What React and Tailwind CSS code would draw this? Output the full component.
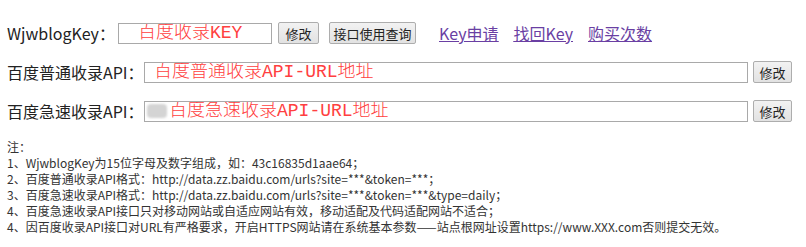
import React from 'react';

const cjk = { fontFamily: '"Noto Sans CJK SC", sans-serif' };
const red = { fontFamily: '"Liberation Mono", "Noto Sans CJK SC", monospace' };

function Btn({ children, className = '' }) {
  return (
    <button
      type="button"
      className={`h-[22px] px-0 whitespace-nowrap flex items-center justify-center border border-[#adadad] rounded-[2px] bg-gradient-to-b from-[#f2f2f2] to-[#e2e2e2] text-[13px] leading-none text-[#222] ${className}`}
    >
      {children}
    </button>
  );
}

export default function App() {
  return (
    <div className="w-[806px] h-[247px] overflow-hidden bg-white pl-[7px] pt-[22px] text-[#222]" style={cjk}>
      <div className="flex items-center h-[22px]">
        <span className="text-[16px] w-[111px]">WjwblogKey：</span>
        <div className="w-[154px] h-[21px] border border-[#a9a9a9] flex items-center pl-[19px] overflow-hidden">
          <span className="text-[18px] leading-none font-light text-[#ff4040] whitespace-nowrap" style={red}>百度收录KEY</span>
        </div>
        <Btn className="ml-[6px] w-[41px]">修改</Btn>
        <Btn className="ml-[10px] w-[87px]">接口使用查询</Btn>
        <div className="flex items-center gap-[15px] ml-[23px] text-[16px] text-[#6a3fa3] underline">
          <a href="#">Key申请</a>
          <a href="#">找回Key</a>
          <a href="#">购买次数</a>
        </div>
      </div>

      <div className="flex items-center h-[22px] mt-[17px]">
        <span className="text-[16px] w-[137px]">百度普通收录API：</span>
        <div className="w-[604px] h-[21px] border border-[#a9a9a9] flex items-center pl-[9px] overflow-hidden">
          <span className="text-[18px] leading-none font-light text-[#ff4040] whitespace-nowrap" style={red}>百度普通收录API-URL地址</span>
        </div>
        <Btn className="ml-[5px] w-[39px]">修改</Btn>
      </div>

      <div className="flex items-center h-[22px] mt-[17px]">
        <span className="text-[16px] w-[137px]">百度急速收录API：</span>
        <div className="w-[604px] h-[21px] border border-[#a9a9a9] flex items-center pl-[2px] overflow-hidden">
          <span className="w-[20px] h-[14px] bg-[#d4d4d4] blur-[1px] rounded-sm shrink-0 mr-[2px]" />
          <span className="text-[18px] leading-none font-light text-[#ff4040] whitespace-nowrap" style={red}>百度急速收录API-URL地址</span>
        </div>
        <Btn className="ml-[5px] w-[39px]">修改</Btn>
      </div>

      <div className="mt-[17px] text-[12px] leading-[16px] text-[#333]">
        <div>注：</div>
        <div>1、WjwblogKey为15位字母及数字组成，如：43c16835d1aae64；</div>
        <div>2、百度普通收录API格式：http://data.zz.baidu.com/urls?site=***&amp;token=***；</div>
        <div>3、百度急速收录API格式：http://data.zz.baidu.com/urls?site=***&amp;token=***&amp;type=daily；</div>
        <div>4、百度急速收录API接口只对移动网站或自适应网站有效，移动适配及代码适配网站不适合；</div>
        <div>4、因百度收录API接口对URL有严格要求，开启HTTPS网站请在系统基本参数——站点根网址设置https://www.XXX.com否则提交无效。</div>
      </div>
    </div>
  );
}
